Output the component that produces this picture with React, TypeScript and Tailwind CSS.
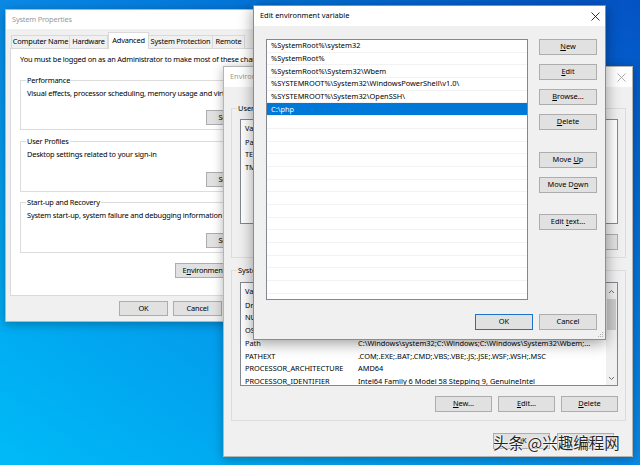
import type { ReactNode } from "react";

type BtnProps = { children: ReactNode; className?: string; primary?: boolean };

const Btn = ({ children, className = "", primary = false }: BtnProps) => (
  <div
    className={`flex shrink-0 items-center justify-center bg-[#e1e1e1] text-[7.4px] leading-none text-black ${
      primary ? "border-[1.5px] border-[#1a73c9]" : "border border-[#adadad]"
    } ${className}`}
  >
    <span className="whitespace-pre">{children}</span>
  </div>
);

const Key = ({ children }: { children: ReactNode }) => (
  <span className="underline underline-offset-[1px]">{children}</span>
);

const CloseIcon = ({ className = "" }: { className?: string }) => (
  <svg width="9" height="9" viewBox="0 0 9 9" className={className}>
    <path d="M0.5 0.5 8.5 8.5M8.5 0.5 0.5 8.5" stroke="currentColor" strokeWidth="0.8" fill="none" />
  </svg>
);

const Chevron = ({ up }: { up?: boolean }) => (
  <svg width="7" height="5" viewBox="0 0 7 5" className="text-[#606060]">
    <path d={up ? "M1 4 3.5 1.5 6 4" : "M1 1 3.5 3.5 6 1"} stroke="currentColor" strokeWidth="0.9" fill="none" />
  </svg>
);

interface GroupBoxProps {
  label: string;
  className?: string;
  labelBg?: string;
  children: ReactNode;
}

const GroupBox = ({ label, className = "", labelBg = "bg-white", children }: GroupBoxProps) => (
  <div className={`relative shrink-0 border border-[#dcdcdc] ${className}`}>
    <span className={`absolute -top-[6px] left-[5px] whitespace-nowrap px-[1px] text-[7.4px] leading-[10px] text-black ${labelBg}`}>
      {label}
    </span>
    {children}
  </div>
);

const tabs = ["Computer Name", "Hardware", "Advanced", "System Protection", "Remote"];
const tabWidths = ["w-[59px]", "w-[39px]", "w-[41px]", "w-[65px]", "w-[33px]"];

const sysGroups = [
  { label: "Performance", text: "Visual effects, processor scheduling, memory usage and virtual memory", h: "h-[50px]" },
  { label: "User Profiles", text: "Desktop settings related to your sign-in", h: "h-[51px] mt-[11px]" },
  { label: "Start-up and Recovery", text: "System start-up, system failure and debugging information", h: "h-[51px] mt-[10px]" },
];

const SystemProperties = () => (
  <div className="absolute left-[5px] top-[9px] flex h-[313px] w-[279px] flex-col border border-[#b5b5b5] bg-[#f0f0f0] tracking-[-0.18px] shadow-[0_2px_10px_rgba(0,0,0,0.3)]">
    <div className="flex h-[19px] shrink-0 items-center bg-white px-[6px] text-[7.4px] text-[#9a9a9a]">
      System Properties
    </div>
    <div className="flex flex-1 flex-col pl-[4px] pr-[5px] pt-[4px]">
      <div className="flex h-[15px] items-end pl-[1px]">
        {tabs.map((t, i) =>
          t === "Advanced" ? (
            <div
              key={t}
              className={`relative z-10 -mb-px flex h-[17px] ${tabWidths[i]} items-center justify-center whitespace-nowrap border border-b-0 border-[#d9d9d9] bg-white text-[7.4px] text-black`}
            >
              {t}
            </div>
          ) : (
            <div
              key={t}
              className={`flex h-[13px] ${tabWidths[i]} items-center justify-center whitespace-nowrap border border-b-0 border-[#d9d9d9] bg-[#f0f0f0] text-[7.4px] text-black ${
                i === 0 ? "" : "-ml-px"
              }`}
            >
              {t}
            </div>
          )
        )}
      </div>
      <div className="flex h-[248px] shrink-0 flex-col border border-[#d9d9d9] bg-white pl-[9px] pr-[6px] pt-[5px]">
        <div className="h-[10px] whitespace-nowrap text-[7.4px] leading-[10px] text-black">
          You must be logged on as an Administrator to make most of these changes.
        </div>
        <div className="mt-[16px] flex flex-col">
          {sysGroups.map((g) => (
            <GroupBox key={g.label} label={g.label} className={`flex flex-col ${g.h}`}>
              <div className="mt-[7px] whitespace-nowrap pl-[6px] text-[7.4px] leading-[10px] text-black">{g.text}</div>
              <div className="mt-auto mb-[4px] flex justify-end pr-[7px]">
                <Btn className="h-[15px] w-[57px]">Settings...</Btn>
              </div>
            </GroupBox>
          ))}
        </div>
        <div className="mt-[10px] flex justify-end pr-[1px]">
          <Btn className="h-[15px] w-[95px]">
            E<Key>n</Key>vironment Variables...
          </Btn>
        </div>
      </div>
      <div className="mt-[5px] flex justify-end gap-[5px] pr-[2px]">
        <Btn className="h-[15px] w-[49px]">OK</Btn>
        <Btn className="h-[15px] w-[49px]">Cancel</Btn>
        <Btn className="h-[15px] w-[49px] text-[#a0a0a0]">Apply</Btn>
      </div>
    </div>
  </div>
);

const userVars = [
  ["Path", "%USERPROFILE%\\AppData\\Local\\Microsoft\\WindowsApps;"],
  ["TEMP", "%USERPROFILE%\\AppData\\Local\\Temp"],
  ["TMP", "%USERPROFILE%\\AppData\\Local\\Temp"],
];

const systemVars = [
  ["DriverData", "C:\\Windows\\System32\\Drivers\\DriverData"],
  ["NUMBER_OF_PROCESSORS", "4"],
  ["OS", "Windows_NT"],
  ["Path", "C:\\Windows\\system32;C:\\Windows;C:\\Windows\\System32\\Wbem;..."],
  ["PATHEXT", ".COM;.EXE;.BAT;.CMD;.VBS;.VBE;.JS;.JSE;.WSF;.WSH;.MSC"],
  ["PROCESSOR_ARCHITECTURE", "AMD64"],
  ["PROCESSOR_IDENTIFIER", "Intel64 Family 6 Model 58 Stepping 9, GenuineIntel"],
];

const VarList = ({ rows, height, scroll }: { rows: string[][]; height: string; scroll?: boolean }) => (
  <div className={`flex ${height} shrink-0 overflow-hidden border border-[#828790] bg-white`}>
    <div className="flex min-w-0 flex-1 flex-col">
      <div className="flex h-[16px] shrink-0 items-center text-[7.4px] text-black">
        <div className="h-full w-[113px] shrink-0 border-r border-[#e5e5e5] pl-[4px] leading-[16px]">Variable</div>
        <div className="pl-[4px]">Value</div>
      </div>
      {rows.map(([k, v]) => (
        <div key={k} className="flex h-[12.7px] shrink-0 items-center whitespace-nowrap text-[7.4px] text-black">
          <div className="w-[113px] shrink-0 pl-[4px]">{k}</div>
          <div className="pl-[4px]">{v}</div>
        </div>
      ))}
    </div>
    {scroll && (
      <div className="flex w-[11px] shrink-0 flex-col items-center bg-[#f0f0f0]">
        <div className="flex h-[16px] items-center">
          <Chevron up />
        </div>
        <div className="h-[31px] w-[9px] bg-[#cdcdcd]" />
        <div className="mt-auto flex h-[14px] items-center">
          <Chevron />
        </div>
      </div>
    )}
  </div>
);

const VarButtons = () => (
  <div className="mt-[10px] flex justify-end gap-[6px] pr-[7px]">
    <Btn className="h-[16px] w-[57px]">
      <Key>N</Key>ew...
    </Btn>
    <Btn className="h-[16px] w-[57px]">
      <Key>E</Key>dit...
    </Btn>
    <Btn className="h-[16px] w-[57px]">
      <Key>D</Key>elete
    </Btn>
  </div>
);

const EnvironmentVariables = () => (
  <div className="absolute left-[223px] top-[66px] flex h-[391px] w-[410px] flex-col border border-[#b5b5b5] bg-[#f0f0f0] shadow-[0_2px_10px_rgba(0,0,0,0.3)]">
    <div className="flex h-[20px] shrink-0 items-center justify-between bg-white pl-[6px] pr-[6px] text-[7.4px] text-[#9a9a9a]">
      <span>Environment Variables</span>
      <CloseIcon className="text-[#9a9a9a]" />
    </div>
    <div className="flex flex-1 flex-col pl-[7px] pr-[6px] pt-[21px]">
      <GroupBox label="User variables for admin" labelBg="bg-[#f0f0f0]" className="flex h-[150px] flex-col pl-[8px] pt-[10px]">
        <div className="pr-[7px]">
          <VarList rows={userVars} height="h-[105px]" />
        </div>
        <VarButtons />
      </GroupBox>
      <GroupBox label="System variables" labelBg="bg-[#f0f0f0]" className="mt-[12px] flex h-[151px] flex-col pl-[8px] pt-[11px]">
        <div className="pr-[7px]">
          <VarList rows={systemVars} height="h-[104px]" scroll />
        </div>
        <VarButtons />
      </GroupBox>
      <div className="mt-[12px] flex justify-end gap-[7px] pr-[12px]">
        <Btn className="h-[16px] w-[57px]">OK</Btn>
        <Btn className="h-[16px] w-[57px]">Cancel</Btn>
      </div>
    </div>
  </div>
);

const pathEntries = [
  "%SystemRoot%\\system32",
  "%SystemRoot%",
  "%SystemRoot%\\System32\\Wbem",
  "%SYSTEMROOT%\\System32\\WindowsPowerShell\\v1.0\\",
  "%SYSTEMROOT%\\System32\\OpenSSH\\",
  "C:\\php",
];

const EditEnvironmentVariable = () => {
  const rows = [...pathEntries, ...Array(15).fill("")];
  return (
    <div className="absolute left-[253px] top-[5px] flex h-[335px] w-[353px] flex-col border border-[#8c8c8c] bg-[#f0f0f0] shadow-[0_3px_14px_rgba(0,0,0,0.4)]">
      <div className="flex h-[20px] shrink-0 items-center justify-between bg-white pl-[6px] pr-[5px] text-[7.4px] text-black">
        <span>Edit environment variable</span>
        <CloseIcon className="text-black" />
      </div>
      <div className="flex flex-1 flex-col pl-[12px] pr-[8px] pt-[13px]">
        <div className="flex">
          <div className="flex h-[261px] w-[262px] shrink-0 flex-col overflow-hidden border border-[#828790] bg-white">
            {rows.map((r, i) => (
              <div
                key={i}
                className={`flex h-[12.7px] shrink-0 items-center border-b border-[#f2f2f2] pl-[4px] text-[7.4px] ${
                  r === "C:\\php" ? "bg-[#0078d7] text-white" : "text-black"
                }`}
              >
                {r}
              </div>
            ))}
          </div>
          <div className="ml-[11px] flex w-[58px] flex-col">
            <Btn className="h-[16px]">
              <Key>N</Key>ew
            </Btn>
            <Btn className="mt-[9px] h-[16px]">
              <Key>E</Key>dit
            </Btn>
            <Btn className="mt-[9px] h-[16px]">
              <Key>B</Key>rowse...
            </Btn>
            <Btn className="mt-[9px] h-[16px]">
              <Key>D</Key>elete
            </Btn>
            <Btn className="mt-[22px] h-[16px]">
              Move <Key>U</Key>p
            </Btn>
            <Btn className="mt-[9px] h-[16px]">
              Move D<Key>o</Key>wn
            </Btn>
            <Btn className="mt-[21px] h-[16px]">
              Edit <Key>t</Key>ext...
            </Btn>
          </div>
        </div>
        <div className="mt-[14px] flex justify-end gap-[6px]">
          <Btn primary className="h-[16px] w-[58px]">
            OK
          </Btn>
          <Btn className="h-[16px] w-[58px]">Cancel</Btn>
        </div>
      </div>
      <svg width="6" height="6" viewBox="0 0 6 6" className="absolute bottom-[1px] right-[1px] text-[#b0b0b0]">
        <rect x="4" y="0" width="1" height="1" fill="currentColor" />
        <rect x="2" y="2" width="1" height="1" fill="currentColor" />
        <rect x="4" y="2" width="1" height="1" fill="currentColor" />
        <rect x="0" y="4" width="1" height="1" fill="currentColor" />
        <rect x="2" y="4" width="1" height="1" fill="currentColor" />
        <rect x="4" y="4" width="1" height="1" fill="currentColor" />
      </svg>
    </div>
  );
};

export default function App() {
  return (
    <div className="relative h-[465px] w-[640px] overflow-hidden bg-linear-to-bl from-[#0552c4] via-[#0a8ae6] to-[#00bbf7] font-['Segoe_UI','Noto_Sans',sans-serif]">
      <SystemProperties />
      <EnvironmentVariables />
      <EditEnvironmentVariable />
      <div className="absolute left-[493px] top-[431px] whitespace-nowrap font-['Noto_Sans_CJK_SC',sans-serif] text-[15.5px] leading-[22px] text-[#262626] [text-shadow:0_0_2px_#fff,0_0_2px_#fff,0_0_1px_#fff]">
        头条 @兴趣编程网
      </div>
    </div>
  );
}
